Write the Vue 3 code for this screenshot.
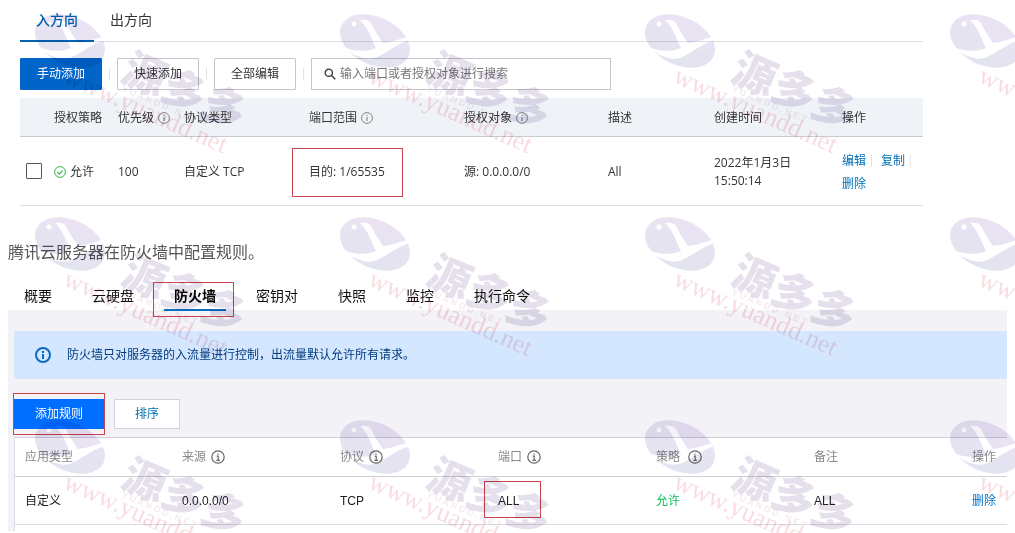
<template>
  <div class="page">
    <section class="security-group">
      <nav class="tabs">
        <button
          v-for="(tab, index) in directions"
          :key="tab"
          type="button"
          class="tab"
          :class="{ active: index === direction }"
          @click="direction = index"
        >{{ tab }}</button>
      </nav>

      <div class="toolbar">
        <button type="button" class="btn primary">手动添加</button>
        <span class="divider"></span>
        <button type="button" class="btn">快速添加</button>
        <span class="divider"></span>
        <button type="button" class="btn">全部编辑</button>
        <span class="divider"></span>
        <label class="search">
          <svg width="12" height="12" viewBox="0 0 12 12" fill="none" stroke="#333" stroke-width="1.3">
            <circle cx="4.8" cy="4.8" r="3.6" />
            <path d="M7.5 7.5L11.3 11.3" />
          </svg>
          <input v-model="keyword" type="text" aria-label="搜索" placeholder="输入端口或者授权对象进行搜索" />
        </label>
      </div>

      <table class="rules">
        <colgroup>
          <col v-for="(w, index) in ruleWidths" :key="index" :style="{ width: w + 'px' }" />
        </colgroup>
        <thead>
          <tr>
            <th></th>
            <th v-for="col in ruleColumns" :key="col.label">
              <span class="head">
                {{ col.label }}
                <svg v-if="col.info" width="12" height="12" viewBox="0 0 12 12" fill="none" stroke="#777">
                  <circle cx="6" cy="6" r="5.4" stroke-width="0.9" />
                  <path d="M6 5V9M6 3V4" />
                </svg>
              </span>
            </th>
          </tr>
        </thead>
        <tbody>
          <tr>
            <td class="check"><input v-model="selected" type="checkbox" aria-label="选择规则" /></td>
            <td>
              <span class="head">
                <svg width="12" height="12" viewBox="0 0 12 12" fill="none" stroke="#35b34a">
                  <circle cx="6" cy="6" r="5.4" />
                  <path d="M3.4 6.2L5.3 8L8.6 4.6" stroke-width="1.2" />
                </svg>
                允许
              </span>
            </td>
            <td>100</td>
            <td>自定义 TCP</td>
            <td><span class="mark mark-port">目的: 1/65535</span></td>
            <td>源: 0.0.0.0/0</td>
            <td>All</td>
            <td>2022年1月3日<br />15:50:14</td>
            <td class="actions">
              <a href="#">编辑</a><a href="#">复制</a><a href="#" class="last">删除</a>
            </td>
          </tr>
        </tbody>
      </table>
    </section>

    <p class="note">腾讯云服务器在防火墙中配置规则。</p>

    <section class="firewall">
      <nav class="fw-tabs">
        <button
          v-for="(tab, index) in panels"
          :key="tab"
          type="button"
          class="fw-tab"
          :class="{ active: index === panel }"
          @click="panel = index"
        >{{ tab }}</button>
      </nav>

      <div class="fw-body">
        <div class="alert">
          <svg width="16" height="16" viewBox="0 0 16 16" fill="none" stroke="#0a6bc4" stroke-width="2">
            <circle cx="8" cy="8" r="7" />
            <path d="M8 7V12M8 4V6" />
          </svg>
          <span>防火墙只对服务器的入流量进行控制，出流量默认允许所有请求。</span>
        </div>

        <div class="fw-toolbar">
          <span class="mark mark-add"><button type="button" class="fw-btn fill">添加规则</button></span>
          <button type="button" class="fw-btn">排序</button>
        </div>

        <div class="fw-card">
          <table class="fw-table">
            <colgroup>
              <col v-for="(w, index) in fwWidths" :key="index" :style="{ width: w + 'px' }" />
            </colgroup>
            <thead>
              <tr>
                <th v-for="col in fwColumns" :key="col.label">
                  <span class="head" :class="{ wide: col.wide }">
                    {{ col.label }}
                    <svg v-if="col.info" width="14" height="14" viewBox="0 0 14 14" fill="none" stroke="#666" stroke-width="1.2">
                      <circle cx="7" cy="7" r="6.2" />
                      <path d="M5.7 6.2H7.2V10.4M5.4 10.4H9M7 3.4V4.8" />
                    </svg>
                  </span>
                </th>
              </tr>
            </thead>
            <tbody>
              <tr>
                <td>自定义</td>
                <td>0.0.0.0/0</td>
                <td>TCP</td>
                <td><span class="mark mark-all">ALL</span></td>
                <td class="allow">允许</td>
                <td>ALL</td>
                <td><a href="#">删除</a></td>
              </tr>
            </tbody>
          </table>
        </div>
      </div>
    </section>

    <svg class="watermark" width="100%" height="100%" aria-hidden="true">
      <defs>
        <linearGradient id="brand" x1="0" y1="0" x2="0" y2="1">
          <stop offset="0" stop-color="#a478c8" />
          <stop offset="1" stop-color="#7480b8" />
        </linearGradient>
        <pattern id="tile" x="35" y="14" width="305" height="203" patternUnits="userSpaceOnUse">
          <ellipse cx="35" cy="27" rx="37" ry="24" transform="rotate(25 35 27)" fill="url(#brand)" opacity="0.21" />
          <path
            d="M20 6C25 5 29 6 31 9C34 15 38 22 43 29C52 28 60 25 70 22L70 26C58 29 48 38 37 43C27 48 11 41 0 31C10 37 24 39 36 34C31 24 28 13 20 6Z"
            fill="#fff"
          />
          <circle cx="14" cy="10" r="2.5" fill="#fff" />
          <text class="wm-name" x="84" y="66" transform="rotate(23 84 66)">源多多</text>
          <text class="wm-caps" x="86" y="77" transform="rotate(23 86 77)">Y U A N D D . N E T</text>
          <text class="wm-url" x="27" y="68" transform="rotate(24 27 68)">www.yuandd.net</text>
        </pattern>
      </defs>
      <rect width="100%" height="100%" fill="url(#tile)" />
    </svg>
  </div>
</template>

<script setup>
import { ref } from 'vue';

const directions = ['入方向', '出方向'];
const direction = ref(0);
const keyword = ref('');
const selected = ref(false);

const ruleWidths = [34, 64, 66, 125, 155, 144, 106, 128, 81];
const ruleColumns = [
  { label: '授权策略' },
  { label: '优先级', info: true },
  { label: '协议类型' },
  { label: '端口范围', info: true },
  { label: '授权对象', info: true },
  { label: '描述' },
  { label: '创建时间' },
  { label: '操作' },
];

const panels = ['概要', '云硬盘', '防火墙', '密钥对', '快照', '监控', '执行命令'];
const panel = ref(2);

const fwWidths = [157, 158, 158, 158, 158, 158, 45];
const fwColumns = [
  { label: '应用类型' },
  { label: '来源', info: true },
  { label: '协议', info: true },
  { label: '端口', info: true },
  { label: '策略', info: true, wide: true },
  { label: '备注' },
  { label: '操作' },
];
</script>

<style>
body {
  margin: 0;
  background: #fff;
}
</style>

<style scoped>
.page {
  position: relative;
  overflow: hidden;
  padding-bottom: 2px;
  font-family: "Open Sans", "Noto Sans CJK SC", sans-serif;
  font-size: 12px;
  line-height: 18px;
  color: #333;
  background: #fff;
}

button,
input {
  font: inherit;
  color: inherit;
  box-sizing: border-box;
}

button {
  cursor: pointer;
}

a {
  text-decoration: none;
}

table {
  width: 100%;
  table-layout: fixed;
  border-collapse: separate;
  border-spacing: 0;
}

th,
td {
  padding: 0;
  text-align: left;
  font-weight: 400;
  white-space: nowrap;
}

.head {
  display: flex;
  align-items: center;
  gap: 4px;
}

/* security group */
.security-group {
  margin: 0 92px 0 20px;
}

.tabs {
  display: flex;
  height: 41px;
  border-bottom: 1px solid #dcdee3;
}

.tab {
  height: 42px;
  padding: 0 16px;
  border: 0;
  border-bottom: 2px solid transparent;
  background: none;
  font-size: 14px;
}

.tab.active {
  border-bottom-color: #0064b4;
  color: #0064b4;
  font-weight: 500;
}

.toolbar {
  display: flex;
  align-items: center;
  gap: 7px;
  padding: 16px 0 8px;
}

.btn {
  width: 82px;
  height: 32px;
  padding: 0;
  border: 1px solid #c4c6cf;
  border-radius: 1px;
  background: #fff;
}

.btn.primary {
  border-color: #0064c8;
  background: #0064c8;
  color: #fff;
}

.divider {
  width: 1px;
  height: 12px;
  background: #e3e4e8;
}

.search {
  display: flex;
  align-items: center;
  gap: 4px;
  box-sizing: border-box;
  width: 300px;
  height: 32px;
  padding: 0 12px;
  border: 1px solid #c4c6cf;
}

.search input {
  flex: 1;
  min-width: 0;
  padding: 0;
  border: 0;
  outline: 0;
  background: none;
}

.search input::placeholder {
  color: #777;
  opacity: 1;
}

.rules th {
  height: 36px;
  padding-top: 2px;
  border-bottom: 1px solid #c8ccd2;
  background: #eff3f8;
}

.rules td {
  height: 66px;
  padding-top: 2px;
  border-bottom: 1px solid #dcdee3;
}

.check input {
  display: block;
  width: 16px;
  height: 16px;
  margin: 0 0 2px 6px;
  border: 1px solid #555;
  border-radius: 1px;
  appearance: none;
  background: #fff;
}

.check input:checked {
  background: #0064c8;
}

.rules .actions {
  white-space: normal;
  line-height: 23px;
}

.actions a {
  display: inline-block;
  color: #0070b8;
  line-height: 12px;
  padding-right: 5px;
  margin-right: 9px;
  border-right: 1px solid #e3e4e8;
}

.actions a:nth-child(2) {
  margin-right: 0;
}

.actions .last {
  border-right: 0;
}

/* red outlines around the values that matter */
.mark {
  position: relative;
}

.mark::after {
  content: "";
  position: absolute;
  border: 1px solid #c8444e;
  pointer-events: none;
}

.mark-port::after {
  inset: -15px -18px -17px -17px;
}

.mark-add::after {
  inset: -6px -1px;
}

.mark-all::after {
  inset: -13px -22px -10px -14px;
}

.note {
  margin: 34px 8px 0;
  font-size: 16px;
  line-height: 24px;
  color: #555;
}

/* firewall */
.firewall {
  margin: 18px 8px 0;
  font-family: "Liberation Sans", "Noto Sans CJK SC", sans-serif;
}

.fw-tabs {
  display: flex;
  gap: 20px;
  height: 28px;
  padding-left: 6px;
}

.fw-tab {
  position: relative;
  height: 29px;
  padding: 0 10px;
  border: 0;
  border-bottom: 2px solid transparent;
  background: none;
  font-size: 14px;
  color: #111;
}

.fw-tab.active {
  border-bottom-color: #0a6ebd;
  color: #000;
  font-weight: 700;
}

.fw-tab.active::after {
  content: "";
  position: absolute;
  inset: 0 -8px -8px -11px;
  border: 1px solid #c8444e;
  pointer-events: none;
}

.fw-body {
  padding: 21px 0 0 6px;
  background: #f2f2f7;
}

.alert {
  display: flex;
  align-items: center;
  gap: 16px;
  height: 48px;
  padding-left: 21px;
  background: #d5e7ff;
  color: #003b80;
}

.fw-toolbar {
  display: flex;
  gap: 10px;
  padding: 20px 0 8px;
}

.mark-add {
  display: flex;
}

.fw-btn {
  width: 66px;
  height: 30px;
  padding: 0;
  border: 1px solid #cfd5de;
  background: #fff;
  color: #006eaf;
}

.fw-btn.fill {
  width: 90px;
  border-color: #006eff;
  background: #006eff;
  color: #fff;
}

.fw-card {
  padding-bottom: 6px;
  border-top: 1px solid #cfd0d6;
  border-left: 1px solid #dcdde2;
  background: #fff;
}

.fw-table th,
.fw-table td {
  padding-left: 10px;
}

.fw-table th {
  height: 38px;
  border-bottom: 1px solid #cfd0d6;
  color: #888;
}

.fw-table td {
  height: 47px;
  border-bottom: 1px solid #dcdde2;
  color: #222;
}

.fw-table .head {
  gap: 5px;
}

.fw-table .head.wide {
  gap: 8px;
}

.fw-table .allow {
  color: #0abf5b;
}

.fw-table a {
  color: #0070c8;
}

/* watermark tiled over the page */
.watermark {
  position: absolute;
  inset: 0;
  mix-blend-mode: multiply;
  pointer-events: none;
}

.wm-name {
  font: 900 43px "Noto Sans CJK SC", sans-serif;
  fill: #7d62a0;
  opacity: 0.2;
}

.wm-caps {
  font: 700 9px "Liberation Sans", sans-serif;
  fill: #b06a90;
  opacity: 0.14;
}

.wm-url {
  font: 400 26px "Liberation Serif", serif;
  fill: #e06070;
  opacity: 0.22;
}
</style>
